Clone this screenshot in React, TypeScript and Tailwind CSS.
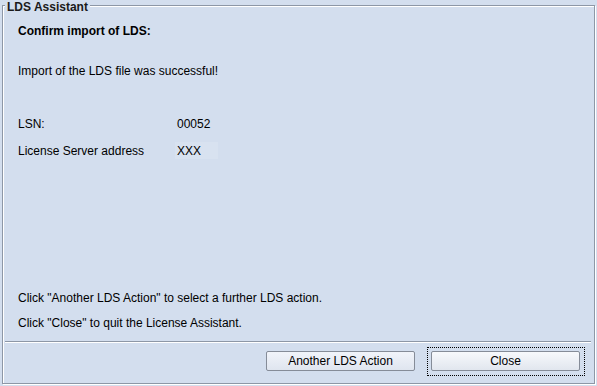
import React from "react";

export default function App() {
  return (
    <div
      className="w-[597px] h-[386px] bg-[#d3deee] text-black text-[12px] leading-[14px] overflow-hidden pt-[5px] pl-[2px]"
      style={{ fontFamily: '"Liberation Sans", Arial, sans-serif' }}
    >
      <div className="relative w-[593px] h-[379px] border border-[#8d97a6] shadow-[1px_1px_0_#ffffff,inset_1px_1px_0_#ffffff] flex flex-col">
        <div className="absolute left-[2px] top-[-6px] px-[2px] bg-[#d3deee] font-bold text-[#1a1a1a]">
          LDS Assistant
        </div>

        <div className="pl-[15px] pt-[18px] flex flex-col">
          <div className="font-bold">Confirm import of LDS:</div>
          <div className="mt-[26px]">Import of the LDS file was successful!</div>

          <div className="mt-[39px] flex">
            <div className="w-[159px]">LSN:</div>
            <div>00052</div>
          </div>
          <div className="mt-[11px] flex items-center">
            <div className="w-[157px]">License Server address</div>
            <div className="w-[43px] h-[17px] bg-[#d8e2f0] pl-[2px] flex items-center">XXX</div>
          </div>

          <div className="mt-[132px]">Click "Another LDS Action" to select a further LDS action.</div>
          <div className="mt-[11px]">Click "Close" to quit the License Assistant.</div>
        </div>

        <div className="mt-[11px] ml-[2px] mr-[3px] h-[2px] border-t border-[#8d97a6] border-b border-b-white" />

        <div className="mt-[8px] pr-[14px] flex justify-end gap-[16px]">
          <button className="w-[149px] h-[20px] rounded-[2px] border border-[#858c98] bg-gradient-to-b from-[#f1f4fa] to-[#dfe5ef] text-[12px] leading-[14px] text-black">
            Another LDS Action
          </button>
          <div className="relative">
            <div className="absolute left-[-4px] top-[-4px] right-[-5px] bottom-[-5px] border border-dotted border-black" />
            <button className="w-[149px] h-[20px] rounded-[2px] border border-[#858c98] bg-gradient-to-b from-[#f7f9fc] to-[#e1e6ee] text-[12px] leading-[14px] text-black">
              Close
            </button>
          </div>
        </div>
      </div>
    </div>
  );
}
